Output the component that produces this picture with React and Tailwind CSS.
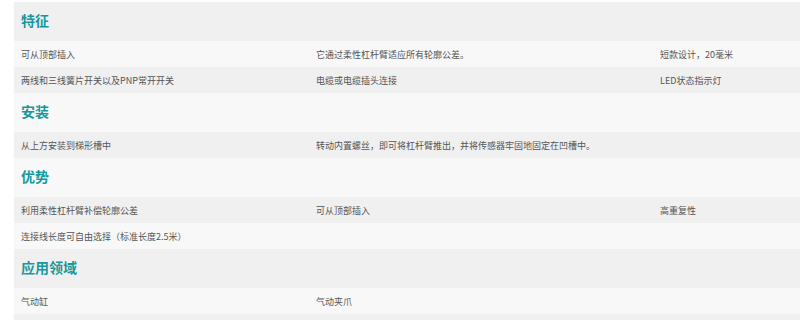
const sections = [
  {
    title: "特征",
    rows: [
      ["可从顶部插入", "它通过柔性杠杆臂适应所有轮廓公差。", "短款设计，20毫米"],
      ["两线和三线簧片开关以及PNP常开开关", "电缆或电缆插头连接", "LED状态指示灯"],
    ],
  },
  {
    title: "安装",
    rows: [["从上方安装到梯形槽中", "转动内置螺丝，即可将杠杆臂推出，并将传感器牢固地固定在凹槽中。", ""]],
  },
  {
    title: "优势",
    rows: [
      ["利用柔性杠杆臂补偿轮廓公差", "可从顶部插入", "高重复性"],
      ["连接线长度可自由选择（标准长度2.5米）", "", ""],
    ],
  },
  {
    title: "应用领域",
    rows: [
      ["气动缸", "气动夹爪", ""],
      ["", "", ""],
    ],
  },
];

export default function App() {
  return (
    <div
      className="w-[800px] h-[320px] overflow-hidden bg-white pt-[2px] pl-[14px]"
      style={{ fontFamily: '"Noto Sans CJK SC", "Noto Sans", sans-serif' }}
    >
      <table className="w-[786px] table-fixed border-collapse">
        <colgroup>
          <col className="w-[295px]" />
          <col className="w-[344px]" />
          <col />
        </colgroup>
        <tbody>
          {sections.map((s) => (
            <Section key={s.title} section={s} />
          ))}
        </tbody>
      </table>
    </div>
  );
}

function Section({ section }) {
  return (
    <>
      <tr className="odd:bg-[#f0f0f0] even:bg-[#f8f8f8]">
        <td colSpan={3} className="h-[39px] px-[7px] pb-[3px] text-[14px] font-bold leading-none text-[#16989d]">
          {section.title}
        </td>
      </tr>
      {section.rows.map((r, i) => (
        <tr key={i} className="odd:bg-[#f0f0f0] even:bg-[#f8f8f8]">
          {r.map((c, j) => (
            <td key={j} className="h-[26px] px-[7px] text-[9px] leading-none text-[#555] whitespace-nowrap">
              {c}
            </td>
          ))}
        </tr>
      ))}
    </>
  );
}
